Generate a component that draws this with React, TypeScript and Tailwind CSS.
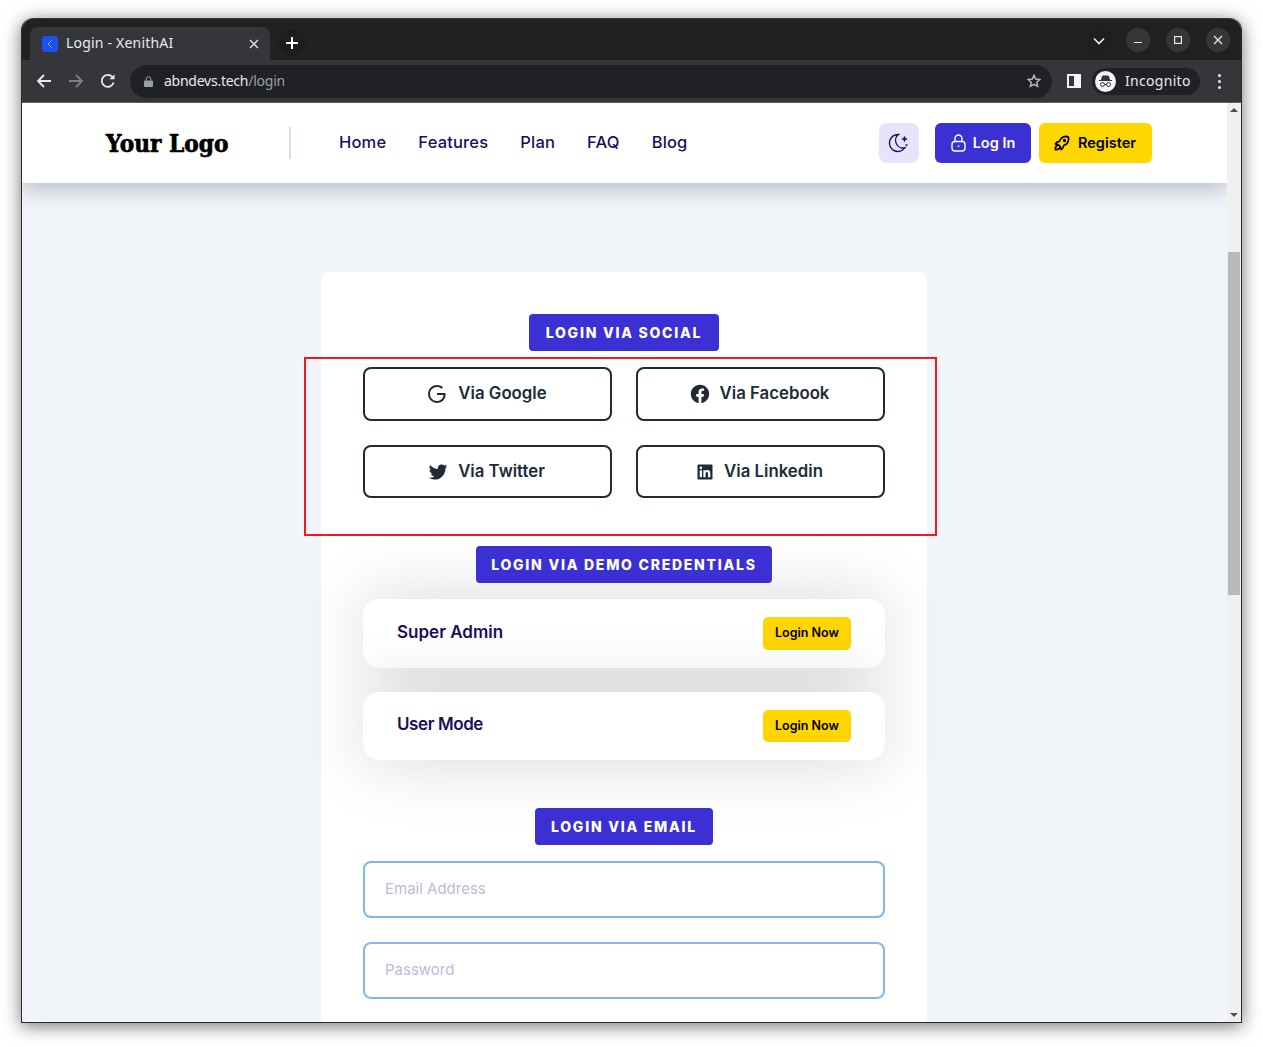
import React from 'react';
import { RiGoogleLine, RiFacebookCircleFill, RiTwitterFill, RiLinkedinBoxFill } from 'react-icons/ri';
import { TbRocket } from 'react-icons/tb';

const NAV_LINKS = ['Home', 'Features', 'Plan', 'FAQ', 'Blog'];
const DEMO_USERS = [
  { label: 'Super Admin', height: 'h-[69px]', btn: 'h-[33px]', text: '-mt-[1px]' },
  { label: 'User Mode', height: 'h-[68px]', btn: 'h-[32px]', text: '-mt-[3px] tracking-[-0.4px]' },
];

const uiFont = { fontFamily: '"Noto Sans", sans-serif' };

const Badge = ({ children, width }: { children: React.ReactNode; width: string }) => (
  <div className="flex justify-center relative z-10">
    <span className={`${width} h-[37px] flex items-center justify-center rounded-[4px] bg-[#3b30d3] text-white text-[14px] font-extrabold tracking-[1.75px] whitespace-nowrap`}>
      <span className="-mt-[1px]">{children}</span>
    </span>
  </div>
);

const SocialButton = ({ icon, label, className = '' }: { icon: React.ReactNode; label: string; className?: string }) => (
  <button className={`flex items-center justify-center gap-[9px] pr-[3px] border-2 border-[#212b36] rounded-lg text-[#212b36] text-[16.8px] font-semibold ${className}`}>
    {icon}
    <span>{label}</span>
  </button>
);

const ChromeBar = () => (
  <div style={uiFont} className="shrink-0">
    {/* Tab strip */}
    <div className="h-[42px] bg-[#212121] flex items-end pl-2 rounded-t-[12px] border-t border-[#3a3a3a]">
      <div className="w-[240px] h-[33px] bg-[#35363a] rounded-t-lg flex items-center pl-3 pr-[11px]">
        <div className="w-4 h-4 rounded-[3px] bg-[#2050f0] flex items-center justify-center mr-2">
          <svg width="8" height="10" viewBox="0 0 8 10" fill="none" stroke="#8fb0ff" strokeWidth="1"><path d="M5.5 1.5 2 5l3.500 3.500" /></svg>
        </div>
        <span className="text-[14px] text-[#e8eaed] flex-1 whitespace-nowrap tracking-[0.2px] -mt-[2px]">Login - XenithAI</span>
        <svg width="10" height="10" viewBox="0 0 10 10" stroke="#dfe1e5" strokeWidth="1.4"><path d="M1 1l8 8M9 1 1 9" /></svg>
      </div>
      <div className="w-[26px] h-[26px] ml-[9px] mb-1 rounded-full bg-[#1d1d1f] flex items-center justify-center">
        <svg width="14" height="14" viewBox="0 0 14 14" stroke="#fff" strokeWidth="2"><path d="M7 1v12M1 7h12" /></svg>
      </div>
      <div className="flex-1" />
      <div className="flex items-center h-full pr-[11px]">
        <div className="w-7 h-7 rounded-full bg-[#1f1f20] flex items-center justify-center mr-[13px] mt-[3px]">
          <svg width="12" height="8" viewBox="0 0 12 8" fill="none" stroke="#e8eaed" strokeWidth="1.7"><path d="M1 1.5l5 5 5-5" /></svg>
        </div>
        <div className="w-6 h-6 rounded-full bg-[#363636] flex items-center justify-center mr-4">
          <svg width="10" height="10" viewBox="0 0 10 10" stroke="#e8eaed" strokeWidth="1"><path d="M1 7.5h8" /></svg>
        </div>
        <div className="w-6 h-6 rounded-full bg-[#363636] flex items-center justify-center mr-4">
          <svg width="10" height="10" viewBox="0 0 10 10" fill="none" stroke="#e8eaed" strokeWidth="1.2"><rect x="1.6" y="1.6" width="6.8" height="6.8" /></svg>
        </div>
        <div className="w-6 h-6 rounded-full bg-[#363636] flex items-center justify-center">
          <svg width="10" height="10" viewBox="0 0 10 10" stroke="#e8eaed" strokeWidth="1.2"><path d="M1 1l8 8M9 1 1 9" /></svg>
        </div>
      </div>
    </div>

    {/* Toolbar */}
    <div className="h-[43px] bg-[#35363a] border-b border-[#5f6064] flex items-center pl-[14px] pr-[16px]">
      <svg className="shrink-0" width="16" height="16" viewBox="0 0 16 16" fill="none" stroke="#e8eaed" strokeWidth="1.8"><path d="M15 8H2M8 2 2 8l6 6" /></svg>
      <svg className="shrink-0 ml-4" width="16" height="16" viewBox="0 0 16 16" fill="none" stroke="#7d7f82" strokeWidth="1.8"><path d="M1 8h13M8 2l6 6-6 6" /></svg>
      <svg className="shrink-0 ml-4" width="16" height="16" viewBox="0 0 16 16" fill="none" stroke="#e8eaed" strokeWidth="1.8"><path d="M13.6 9.500A6 6 0 1 1 12.400 4" /><path d="M14.500 1.200v5h-5z" fill="#e8eaed" stroke="none" /></svg>
      <div className="ml-[14px] w-[922px] h-[33px] rounded-full bg-[#202124] flex items-center pl-[14px] pr-[10px] shrink-0">
        <svg width="9" height="11" viewBox="0 0 9 11" fill="#9aa0a6"><path d="M1 4.500h7a1 1 0 0 1 1 1V10a1 1 0 0 1-1 1H1a1 1 0 0 1-1-1V5.500a1 1 0 0 1 1-1z" /><path d="M2.200 4.500V3a2.300 2.300 0 0 1 4.600 0v1.500" fill="none" stroke="#9aa0a6" strokeWidth="1" /></svg>
        <span className="ml-[11px] text-[14px] text-[#e8eaed] whitespace-nowrap tracking-[-0.25px] -mt-[2px]">abndevs.tech<span className="text-[#9aa0a6]">/login</span></span>
        <div className="flex-1" />
        <svg width="16" height="16" viewBox="0 0 24 24" fill="none" stroke="#b5b8bc" strokeWidth="2.2"><path d="M12 3.500l2.600 5.600 6.100.7-4.500 4.100 1.200 6-5.400-3-5.400 3 1.200-6-4.500-4.100 6.100-.7z" /></svg>
      </div>
      <div className="ml-[15px] w-[14px] h-[14px] border-2 border-[#f1f3f4] flex justify-end shrink-0">
        <div className="w-[5px] h-full bg-[#f1f3f4]" />
      </div>
      <div className="ml-[11px] w-[108px] h-[27px] rounded-full bg-[#202124] flex items-center pl-[3px] shrink-0">
        <div className="w-[21px] h-[21px] rounded-full bg-[#f1f3f4] flex items-center justify-center">
          <svg width="15" height="13" viewBox="0 0 15 13" fill="none" stroke="#35363a" strokeWidth="1"><path d="M3.500 5 4.500 1h6l1 4z" fill="#35363a" /><path d="M1 5.500h13" /><circle cx="4.500" cy="9.500" r="2" /><circle cx="10.500" cy="9.500" r="2" /><path d="M6.500 9.500h2" /></svg>
        </div>
        <span className="ml-[9px] text-[14px] text-[#e8eaed] tracking-[0.3px] -mt-[1px]">Incognito</span>
      </div>
      <div className="ml-[18px] flex flex-col gap-[3px] shrink-0">
        <div className="w-[3px] h-[3px] rounded-full bg-[#e8eaed]" />
        <div className="w-[3px] h-[3px] rounded-full bg-[#e8eaed]" />
        <div className="w-[3px] h-[3px] rounded-full bg-[#e8eaed]" />
      </div>
    </div>
  </div>
);

const Navbar = () => (
  <header className="relative z-20 h-[80px] shrink-0 bg-white shadow-[0_6px_20px_rgba(50,60,80,0.3)] flex items-center pl-[84px] pr-[75px]">
    <div className="w-[183px] text-[25px] leading-none font-black text-black whitespace-nowrap [-webkit-text-stroke:0.7px_black]" style={{ fontFamily: '"DejaVu Serif", serif' }}>
      <span className="inline-block origin-left scale-x-[0.87]">Your Logo</span>
    </div>
    <div className="w-[2px] h-8 bg-[#d8dee8]" />
    <nav className="ml-[48px] flex items-center gap-8 text-[#1a0f5e] text-[16.5px] font-medium tracking-[0.18px] -mt-[2px]">
      {NAV_LINKS.map(link => <a key={link}>{link}</a>)}
    </nav>
    <div className="flex-1" />
    <button className="w-10 h-10 rounded-lg bg-[#e5e4fa] flex items-center justify-center">
      <svg width="22" height="22" viewBox="0 0 22 22" fill="none" stroke="#1a0f5e" strokeWidth="1.4" strokeLinecap="round">
        <path d="M10.500 2.500a8.500 8.500 0 1 0 6.500 13.200A7.500 7.500 0 0 1 10.500 2.500z" />
        <path d="M16.500 5v4M14.500 7h4" strokeWidth="1.6" />
        <path d="M18 13h1" />
      </svg>
    </button>
    <button className="ml-4 w-[96px] h-10 rounded-[6px] bg-[#3b30d3] text-white text-[14.5px] font-semibold flex items-center justify-center gap-[7px]">
      <svg width="15" height="18" viewBox="0 0 15 18" fill="none" stroke="#fff" strokeWidth="1.4">
        <rect x="1" y="7.500" width="13" height="9.500" rx="3" />
        <path d="M4 7.500V4.500a3.500 3.500 0 0 1 7 0v3" />
        <circle cx="7.500" cy="12.200" r="0.9" fill="#fff" stroke="none" />
      </svg>
      Log In
    </button>
    <button className="ml-2 w-[113px] h-10 pr-[3px] rounded-[6px] bg-[#ffd600] text-black text-[14.5px] font-semibold flex items-center justify-center gap-[6px]">
      <TbRocket size={20} />
      Register
    </button>
  </header>
);

const LoginCard = () => (
  <div className="mt-[89px] ml-[299px] w-[606px] shrink-0 bg-white rounded-t-lg px-[42px] pt-[42px] pb-10">
    <Badge width="w-[190px]">LOGIN VIA SOCIAL</Badge>
    <div className="mt-4 grid grid-cols-2 gap-x-6 gap-y-6">
      <SocialButton className="h-[54px]" icon={<RiGoogleLine size={24} />} label="Via Google" />
      <SocialButton className="h-[54px]" icon={<RiFacebookCircleFill size={22} />} label="Via Facebook" />
      <SocialButton className="h-[53px]" icon={<RiTwitterFill size={22} />} label="Via Twitter" />
      <SocialButton className="h-[53px]" icon={<RiLinkedinBoxFill size={20} />} label="Via Linkedin" />
    </div>

    <div className="mt-12">
      <Badge width="w-[296px]">LOGIN VIA DEMO CREDENTIALS</Badge>
    </div>
    <div className="mt-4 flex flex-col gap-6">
      {DEMO_USERS.map(user => (
        <div key={user.label} className={`${user.height} bg-white rounded-2xl shadow-[0_0_70px_rgba(0,0,0,0.16)] flex items-center justify-between pl-[34px] pr-[34px] relative`}>
          <span className={`text-[17px] font-semibold text-[#1a0f5e] ${user.text}`}>{user.label}</span>
          <button className={`${user.btn} w-[88px] rounded-[5px] bg-[#ffd600] text-black text-[12.5px] font-semibold`}>Login Now</button>
        </div>
      ))}
    </div>

    <div className="mt-12 relative">
      <Badge width="w-[178px]">LOGIN VIA EMAIL</Badge>
    </div>
    <div className="mt-4 flex flex-col gap-6 relative">
      <input placeholder="Email Address" className="h-[57px] w-full px-5 pb-[2px] border-2 border-[#7fb8ef] rounded-lg bg-white text-[15px] outline-none placeholder:text-[#c3b8d8]" />
      <input placeholder="Password" className="h-[57px] w-full px-5 pb-[2px] border-2 border-[#7fb8ef] rounded-lg bg-white text-[15px] outline-none placeholder:text-[#c3b8d8]" />
    </div>
  </div>
);

const Scrollbar = () => (
  <div className="w-[14px] shrink-0 bg-[#f0f0f0] flex flex-col items-center relative z-30">
    <div className="mt-[5px] w-0 h-0 border-x-[4px] border-x-transparent border-b-[4px] border-b-[#505050]" />
    <div className="mt-[140px] w-3 h-[343px] bg-[#b9b9b9]" />
    <div className="flex-1" />
    <div className="mb-[5px] w-0 h-0 border-x-[4px] border-x-transparent border-t-[4px] border-t-[#505050]" />
  </div>
);

export default function App() {
  return (
    <div className="w-[1263px] h-[1047px] overflow-hidden bg-white pt-[18px] pl-[21px]" style={{ fontFamily: 'Inter, sans-serif' }}>
      <div className="relative w-[1221px] h-[1005px] flex flex-col rounded-t-[12px] border-x border-b border-[#2b2b2b] shadow-[0_3px_18px_rgba(0,0,0,0.55)]">
        <ChromeBar />
        <div className="flex-1 min-h-0 flex overflow-hidden">
          <main className="flex-1 min-w-0 bg-[#f1f4f9] flex flex-col overflow-hidden">
            <Navbar />
            <LoginCard />
          </main>
          <Scrollbar />
        </div>
        {/* Red annotation drawn over the page */}
        <div className="absolute left-[282px] top-[339px] w-[633px] h-[179px] border-2 border-[#f01a1a] z-40 pointer-events-none" />
      </div>
    </div>
  );
}
